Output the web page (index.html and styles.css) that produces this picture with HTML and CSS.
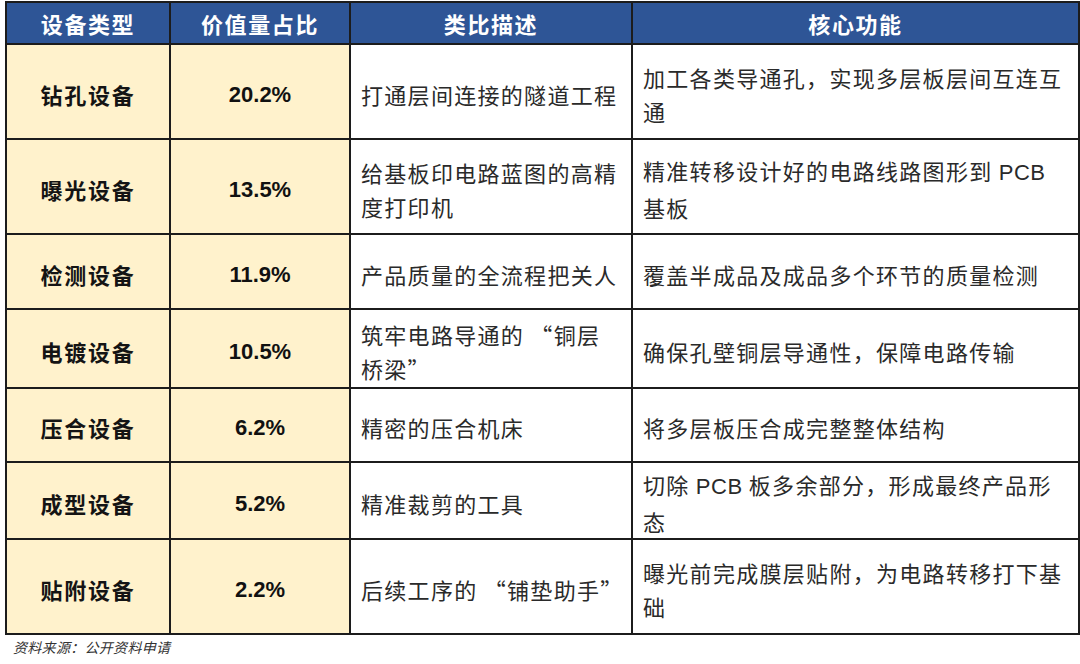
FILE: index.html
```html
<!DOCTYPE html>
<html lang="zh-CN">
<head>
<meta charset="utf-8">
<title>PCB设备价值量占比</title>
<link rel="stylesheet" href="styles.css">
</head>
<body>
<div class="page">
  <table class="equip">
    <colgroup>
      <col class="col-type">
      <col class="col-pct">
      <col class="col-desc">
      <col class="col-func">
    </colgroup>
    <thead>
      <tr class="head-row">
        <th>设备类型</th>
        <th>价值量占比</th>
        <th>类比描述</th>
        <th>核心功能</th>
      </tr>
    </thead>
    <tbody>
      <tr class="row-a">
        <td class="type">钻孔设备</td>
        <td class="pct">20.2%</td>
        <td class="text">打通层间连接的隧道工程</td>
        <td class="text">加工各类导通孔，实现多层板层间互连互<br>通</td>
      </tr>
      <tr class="row-a">
        <td class="type">曝光设备</td>
        <td class="pct">13.5%</td>
        <td class="text">给基板印电路蓝图的高精<br>度打印机</td>
        <td class="text">精准转移设计好的电路线路图形到 <span class="latin">PCB</span><br>基板</td>
      </tr>
      <tr class="row-b">
        <td class="type">检测设备</td>
        <td class="pct">11.9%</td>
        <td class="text">产品质量的全流程把关人</td>
        <td class="text">覆盖半成品及成品多个环节的质量检测</td>
      </tr>
      <tr class="row-c">
        <td class="type">电镀设备</td>
        <td class="pct">10.5%</td>
        <td class="text">筑牢电路导通的 “铜层<br>桥梁”</td>
        <td class="text">确保孔壁铜层导通性，保障电路传输</td>
      </tr>
      <tr class="row-d">
        <td class="type">压合设备</td>
        <td class="pct">6.2%</td>
        <td class="text">精密的压合机床</td>
        <td class="text">将多层板压合成完整整体结构</td>
      </tr>
      <tr class="row-e">
        <td class="type">成型设备</td>
        <td class="pct">5.2%</td>
        <td class="text">精准裁剪的工具</td>
        <td class="text">切除 <span class="latin">PCB</span> 板多余部分，形成最终产品形<br>态</td>
      </tr>
      <tr class="row-a">
        <td class="type">贴附设备</td>
        <td class="pct">2.2%</td>
        <td class="text">后续工序的 “铺垫助手”</td>
        <td class="text">曝光前完成膜层贴附，为电路转移打下基<br>础</td>
      </tr>
    </tbody>
  </table>
  <p class="source">资料来源：公开资料申请</p>
</div>
</body>
</html>
```

FILE: styles.css
```css
html, body {
  margin: 0;
  padding: 0;
  background: #ffffff;
}

.page {
  padding: 1px 0 0 5px;
  font-family: "Noto Sans CJK SC", sans-serif;
}

.equip {
  border-collapse: collapse;
  width: 1073px;
  table-layout: fixed;
}

.col-type { width: 164px; }
.col-pct { width: 180px; }
.col-desc { width: 282px; }
.col-func { width: 447px; }

.equip th,
.equip td {
  border: 2px solid #1c1c1c;
  padding: 0;
}

.head-row { height: 42px; }

.equip th {
  background: #2e5596;
  color: #ffffff;
  font-size: 22px;
  font-weight: 700;
  letter-spacing: 1.6px;
  text-align: center;
  vertical-align: middle;
  line-height: 28px;
}

.row-a { height: 95px; }
.row-b { height: 75px; }
.row-c { height: 79px; }
.row-d { height: 74px; }
.row-e { height: 77px; }

.equip .type {
  background: #fff2cc;
  color: #141414;
  font-size: 22px;
  font-weight: 700;
  letter-spacing: 1.7px;
  text-align: center;
  vertical-align: middle;
  padding-top: 4px;
}

.equip .pct {
  background: #fff2cc;
  color: #111111;
  font-family: "Liberation Sans", Arial, sans-serif;
  font-size: 22px;
  font-weight: 700;
  text-align: center;
  vertical-align: middle;
  padding-top: 6px;
}

.equip .text {
  background: #ffffff;
  color: #2a2a2a;
  font-size: 22px;
  font-weight: 400;
  letter-spacing: 1.3px;
  line-height: 34px;
  padding: 4px 4px 0 10px;
  white-space: nowrap;
  vertical-align: middle;
  text-align: left;
}

.latin {
  font-family: "Liberation Sans", Arial, sans-serif;
  letter-spacing: 0.5px;
}

.source {
  margin: 4px 0 0 8px;
  font-size: 14px;
  line-height: 16px;
  font-style: italic;
  color: #333333;
  letter-spacing: 0.3px;
}
```
